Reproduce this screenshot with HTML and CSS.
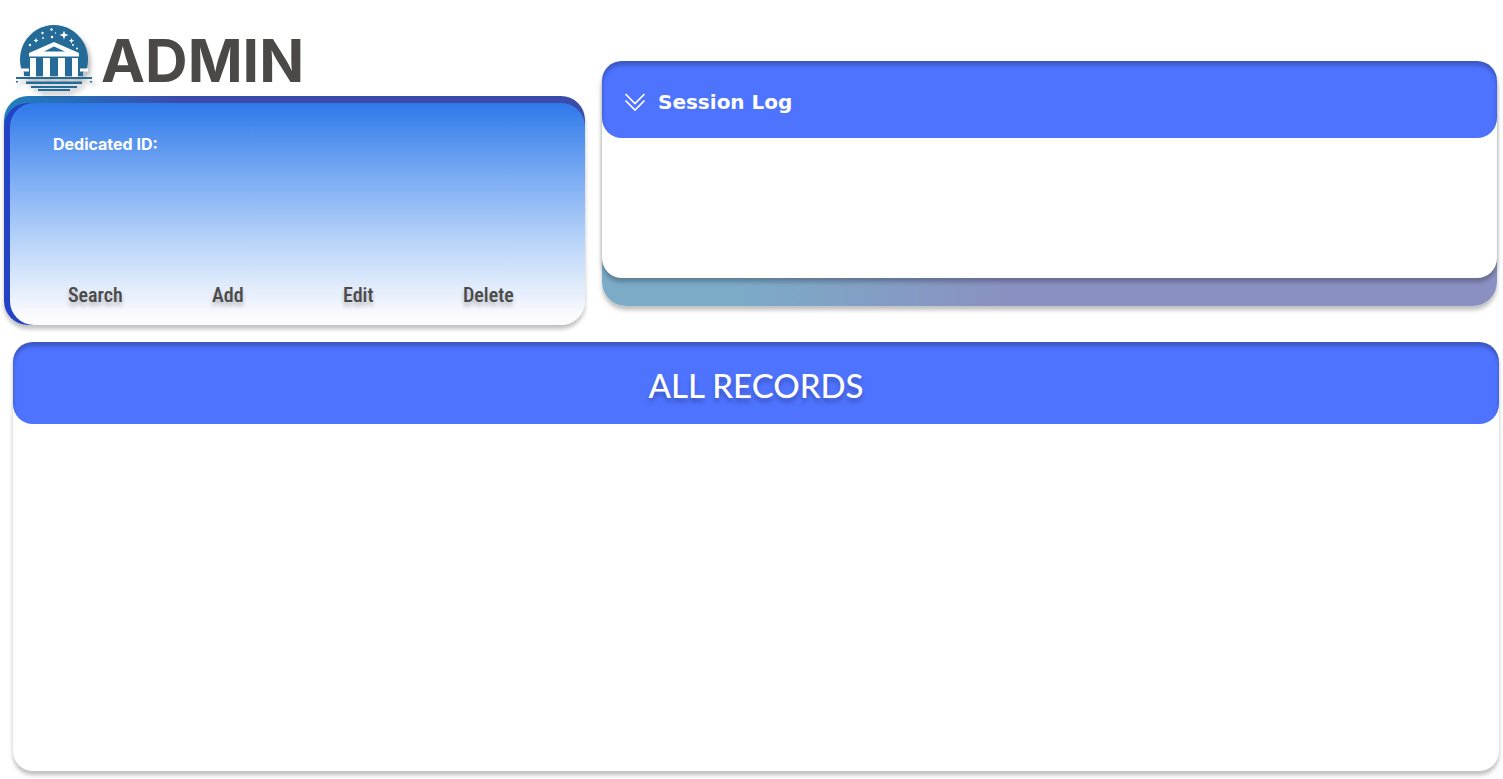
FILE: index.html
```html
<!DOCTYPE html>
<html lang="en">
<head>
<meta charset="utf-8">
<meta name="viewport" content="width=device-width, initial-scale=1">
<title>Admin</title>
<link rel="stylesheet" href="styles.css">
</head>
<body>
<div class="page">
  <div class="top">
    <section class="admin">
      <header class="brand">
        <svg class="logo" viewBox="0 0 76 66" aria-hidden="true">
          <path fill="#246b98" d="M8 51V47L5 43C3 34 4 26 8 18C15 6 26 0 38 0S61 6 68 18C72 26 73 34 71 43L67 47V51Z"/>
          <path fill="#fff" d="M38 17 63 28V31.500H13V28ZM38 21.500 28 26.500H49Z" fill-rule="evenodd"/>
          <path fill="#fff" d="M14 33h6v19h-6zM27 33h7v19h-7zM42 33h7v19h-7zM56 33h6v19h-6z"/>
          <path fill="#fff" d="M5 43.500h8v3H5zM64 43.500h8v3h-8z"/>
          <path fill="#fff" d="m48 5.500 1.200 3.300 3.300 1.200-3.300 1.200-1.200 3.300-1.200-3.300-3.300-1.200 3.300-1.200zM55.500 13l.8 2 2 .8-2 .8-.8 2-.8-2-2-.8 2-.8zM20 13l.8 1.700 1.700.8-1.700.8-.8 1.700-.8-1.700-1.700-.8 1.700-.8z"/>
          <g fill="#fff"><circle cx="35.500" cy="4.500" r="1.200"/><circle cx="26.500" cy="8" r="1.200"/><circle cx="36" cy="12" r="1.300"/><circle cx="27" cy="13" r=".9"/><circle cx="14" cy="20" r="1.200"/><circle cx="57" cy="20" r="1"/><circle cx="39.500" cy="8" r=".7"/><circle cx="61" cy="23.500" r="1"/></g>
          <path fill="#246b98" d="M0 52h76v2H0zM0 56h2v1.500H0zM74 56h2v1.500h-2zM10 56.500h56V59H10zM15 61h46v2H15zM22 64h32v2H22z"/>
        </svg>
        <h1 class="title">ADMIN</h1>
      </header>
      <div class="card">
        <div class="card-side">
          <div class="card-face">
            <p class="card-label">Dedicated ID:</p>
            <div class="actions">
              <button type="button" class="action">Search</button>
              <button type="button" class="action">Add</button>
              <button type="button" class="action">Edit</button>
              <button type="button" class="action">Delete</button>
            </div>
          </div>
        </div>
      </div>
    </section>
    <section class="session">
      <div class="session-head">
        <button type="button" class="toggle">
          <svg class="chevrons" viewBox="0 0 22 20" aria-hidden="true"><path d="M1.500 2 11 11.500 20.500 2M1.500 8.500 11 18 20.500 8.500" fill="none" stroke="#fff" stroke-width="1.700"/></svg>
          <span>Session Log</span>
        </button>
      </div>
      <div class="session-body"></div>
    </section>
  </div>
  <section class="records">
    <h2 class="records-head">ALL RECORDS</h2>
  </section>
</div>
</body>
</html>
```
FILE: styles.css
```css
* { box-sizing: border-box; }
body { margin: 0; background: #fff; font-family: Inter, sans-serif; }
.page {
  min-height: 100vh;
  display: flex;
  flex-direction: column;
  padding: 24px 4px 8px;
}
.top {
  display: grid;
  grid-template-columns: 581fr 895fr;
  gap: 17px;
  padding-right: 2px;
}
.brand {
  display: flex;
  align-items: flex-start;
  gap: 9px;
  height: 72px;
  padding: 1px 0 0 12px;
}
.logo {
  width: 76px;
  height: 66px;
  flex: none;
  overflow: visible;
  filter: drop-shadow(3px 4px 2px rgba(0, 0, 0, 0.25));
}
.title {
  margin: 0;
  font-size: 59px;
  line-height: 71px;
  font-weight: 700;
  color: #4a4947;
}
.card, .card-side, .card-face { border-radius: 24px; }
.card {
  padding-top: 7px;
  background: linear-gradient(to right, #2080bc, #2a68b6 14%, #3b4bab 30%, #3b4bab) top / 100% 60px no-repeat;
  box-shadow: 0 4px 4px rgba(0, 0, 0, 0.25);
}
.card-side {
  padding-left: 6px;
  background: linear-gradient(#2442c4, #2442c4) left / 40px 100% no-repeat;
}
.card-face {
  display: flex;
  flex-direction: column;
  justify-content: space-between;
  min-height: 222px;
  padding: 31px 0 16px;
  background: linear-gradient(#2e79ea, #7aabf3 33%, #bbd6f9 64%, #fbfbfd 96%);
}
.card-label {
  margin: 0 43px;
  font-size: 16px;
  line-height: 20px;
  font-weight: 700;
  color: #fff;
}
.actions {
  display: grid;
  grid-template-columns: 144fr 131fr 120fr 122fr;
  padding-left: 58px;
}
.action {
  justify-self: start;
  padding: 0;
  border: 0;
  background: none;
  font: 500 20px/28px "Roboto Condensed", Roboto, sans-serif;
  color: #4a4947;
  text-shadow: 0 4px 4px rgba(0, 0, 0, 0.25);
  cursor: pointer;
}
.session {
  display: flex;
  flex-direction: column;
  margin: 37px 0 19px;
  padding-bottom: 28px;
  border-radius: 24px;
  background: linear-gradient(to right, #7cabc8 15%, #8a90c1 46%, #8a90c1);
  box-shadow: 0 4px 4px rgba(0, 0, 0, 0.25);
}
.session-head {
  display: flex;
  align-items: center;
  height: 77px;
  padding: 5px 22px 0;
  border-radius: 20px;
  background: #4e73ff;
  box-shadow: inset 0 4px 4px rgba(0, 0, 0, 0.25);
  position: relative;
}
.toggle {
  display: flex;
  align-items: center;
  gap: 12px;
  padding: 0;
  border: 0;
  background: none;
  font: 700 20px/24px "DejaVu Sans", sans-serif;
  color: #fff;
  cursor: pointer;
}
.chevrons { width: 22px; height: 20px; }
.session-body {
  flex: 1;
  margin-top: -77px;
  padding-top: 77px;
  border-radius: 20px;
  background: #fff;
  box-shadow: 0 4px 4px rgba(0, 0, 0, 0.25);
}
.records {
  flex: 1;
  margin: 17px 0 0 9px;
  border-radius: 20px;
  background: #fff;
  box-shadow: 0 4px 4px rgba(0, 0, 0, 0.25);
}
.records-head {
  margin: 0;
  padding: 23px 16px 18px;
  border-radius: 20px;
  background: #4e73ff;
  box-shadow: inset 0 4px 4px rgba(0, 0, 0, 0.25);
  font: 500 33px/41px Lato, sans-serif;
  text-align: center;
  color: #fff;
  text-shadow: 0 4px 4px rgba(0, 0, 0, 0.25);
}
```
